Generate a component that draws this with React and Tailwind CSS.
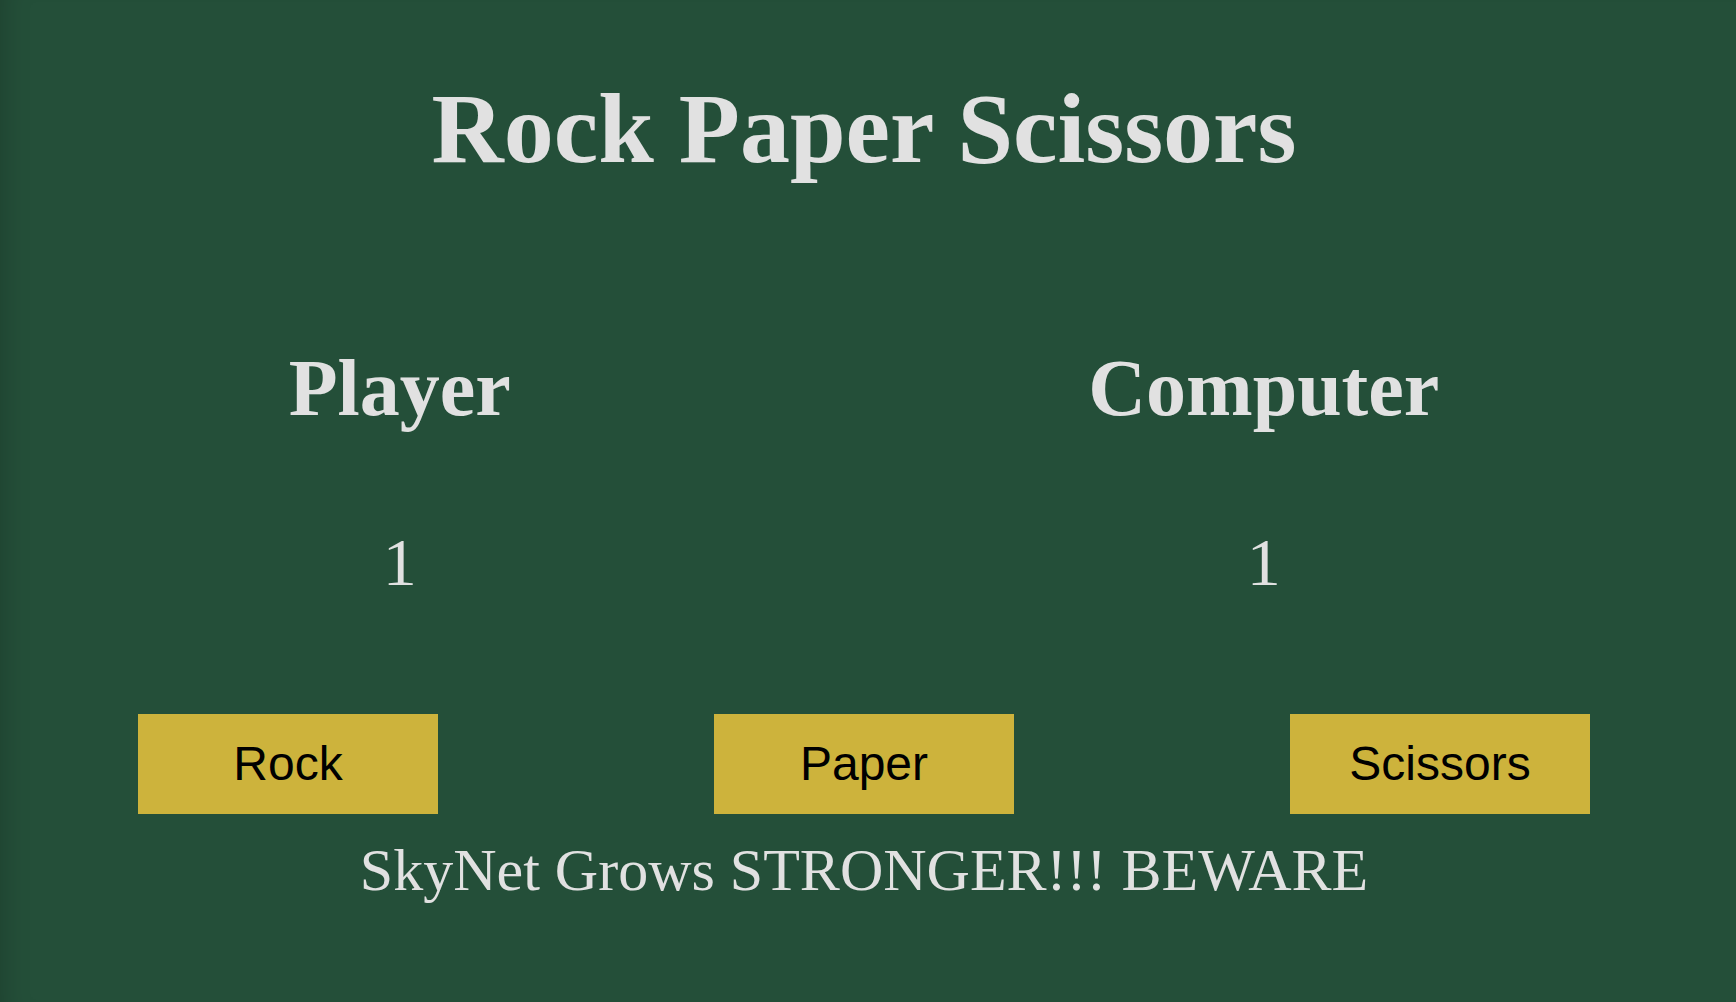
export default function App() {
  const serif = { fontFamily: '"Liberation Serif", "Times New Roman", serif' };
  return (
    <div className="min-h-screen w-full bg-[#244f39] text-[#e1e1e1] shadow-[inset_28px_0_30px_-28px_rgba(0,0,0,0.22)]" style={serif}>
      <div className="w-[1728px] flex flex-col items-center pb-[102px]">
        <h1 className="mt-[79px] text-[100px] leading-none font-bold">Rock Paper Scissors</h1>
        <div className="mt-[169px] w-full flex justify-around">
          <div className="flex flex-col items-center">
            <h2 className="text-[80px] leading-none font-bold">Player</h2>
            <div className="mt-[100px] text-[68px] leading-none">1</div>
          </div>
          <div className="flex flex-col items-center">
            <h2 className="text-[80px] leading-none font-bold">Computer</h2>
            <div className="mt-[100px] text-[68px] leading-none">1</div>
          </div>
        </div>
        <div className="mt-[118px] w-full flex justify-around">
          {["Rock", "Paper", "Scissors"].map((t) => (
            <button
              key={t}
              className="w-[300px] h-[100px] bg-[#cdb33c] text-black text-[48px] leading-none flex items-center justify-center"
              style={{ fontFamily: '"Liberation Sans", Arial, sans-serif' }}
            >
              {t}
            </button>
          ))}
        </div>
        <p className="mt-[26px] text-[60px] leading-none">SkyNet Grows STRONGER!!! BEWARE</p>
      </div>
    </div>
  );
}
